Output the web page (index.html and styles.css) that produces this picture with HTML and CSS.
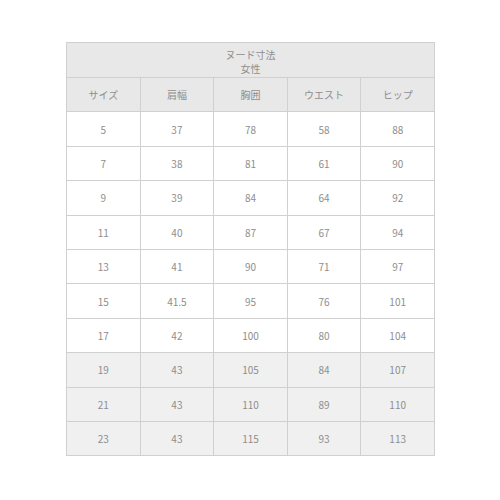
FILE: index.html
```html
<!DOCTYPE html>
<html>
<head>
<meta charset="utf-8">
<link rel="stylesheet" href="styles.css">
</head>
<body>
<div class="wrap">
<table class="size-table">
<thead>
<tr class="title-row"><th colspan="5"><div class="title-line">ヌード寸法</div><div class="title-line">女性</div></th></tr>
<tr class="head-row"><th>サイズ</th><th>肩幅</th><th>胸囲</th><th>ウエスト</th><th>ヒップ</th></tr>
</thead>
<tbody>
<tr><td>5</td><td>37</td><td>78</td><td>58</td><td>88</td></tr>
<tr><td>7</td><td>38</td><td>81</td><td>61</td><td>90</td></tr>
<tr><td>9</td><td>39</td><td>84</td><td>64</td><td>92</td></tr>
<tr><td>11</td><td>40</td><td>87</td><td>67</td><td>94</td></tr>
<tr><td>13</td><td>41</td><td>90</td><td>71</td><td>97</td></tr>
<tr><td>15</td><td>41.5</td><td>95</td><td>76</td><td>101</td></tr>
<tr><td>17</td><td>42</td><td>100</td><td>80</td><td>104</td></tr>
<tr class="shade"><td>19</td><td>43</td><td>105</td><td>84</td><td>107</td></tr>
<tr class="shade"><td>21</td><td>43</td><td>110</td><td>89</td><td>110</td></tr>
<tr class="shade"><td>23</td><td>43</td><td>115</td><td>93</td><td>113</td></tr>
</tbody>
</table>
</div>
</body>
</html>
```
FILE: styles.css
```css
html, body {
  margin: 0;
  padding: 0;
  background: #fff;
}
.wrap {
  padding: 42px 0 0 66px;
}
.size-table {
  border-collapse: collapse;
  width: 369px;
  table-layout: fixed;
  font-family: "Noto Sans CJK JP", "Open Sans", sans-serif;
  font-size: 10px;
  color: #8e8e8e;
}
.size-table th,
.size-table td {
  border: 1px solid #d0d0d0;
  text-align: center;
  font-weight: normal;
  padding: 0;
  height: 33.4px;
}
.title-row th {
  background: #e8e8e8;
  height: 35px;
  padding-top: 5px;
  box-sizing: border-box;
  vertical-align: top;
}
.title-line {
  line-height: 14px;
  height: 14px;
  display: flex;
  justify-content: center;
  align-items: center;
}
.head-row th {
  background: #e8e8e8;
}
.shade td {
  background: #f0f0f0;
}
```
